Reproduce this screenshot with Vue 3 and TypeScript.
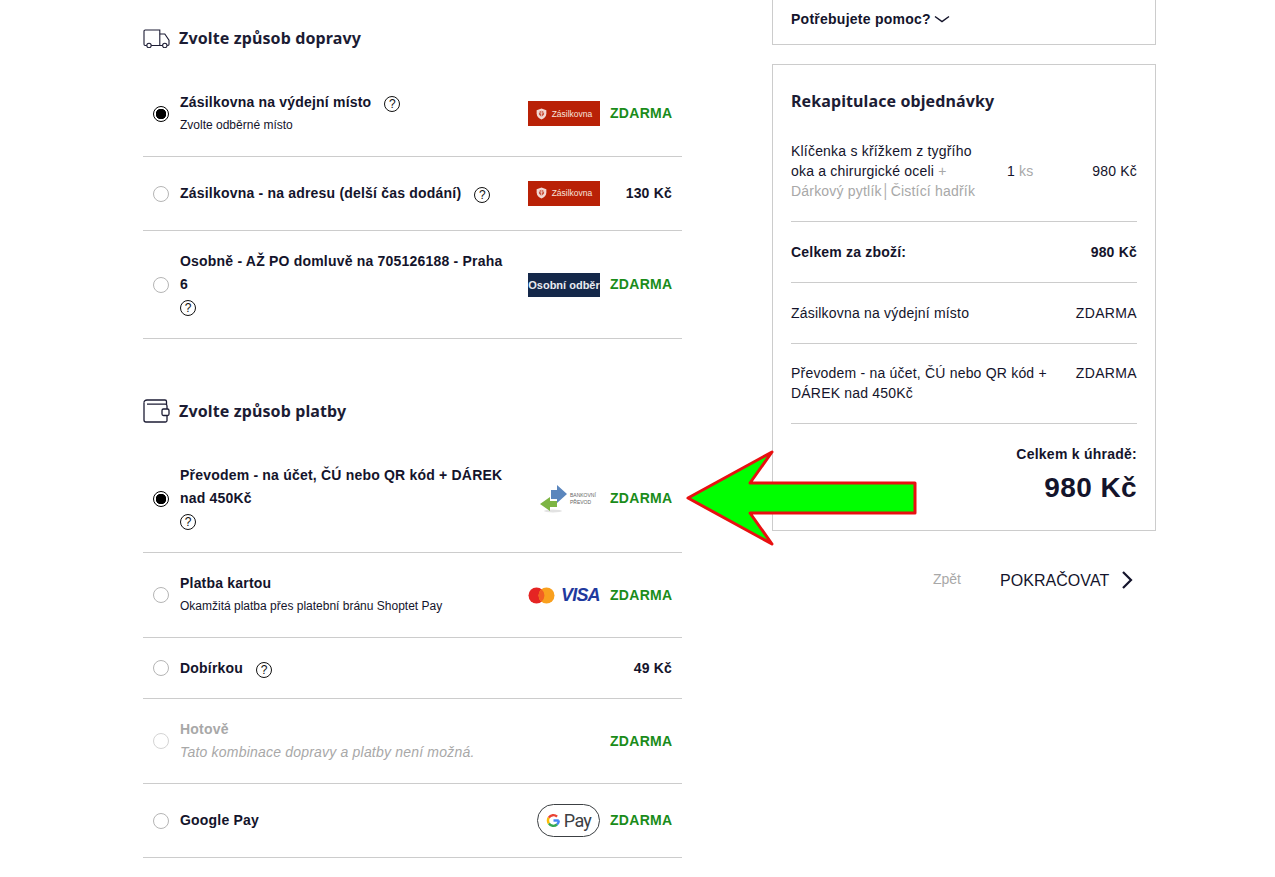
<script setup lang="ts">
type Logo = 'zas' | 'osobni' | 'bank' | 'cards' | 'gpay' | ''
interface Row {
  name: string
  sub?: string
  help?: 'inline' | 'block'
  logo: Logo
  price: string
  checked?: boolean
  disabled?: boolean
}
const delivery: Row[] = [
  { name: 'Zásilkovna na výdejní místo', sub: 'Zvolte odběrné místo', help: 'inline', logo: 'zas', price: 'ZDARMA', checked: true },
  { name: 'Zásilkovna - na adresu (delší čas dodání)', help: 'inline', logo: 'zas', price: '130 Kč' },
  { name: 'Osobně - AŽ PO domluvě na 705126188 - Praha 6', help: 'block', logo: 'osobni', price: 'ZDARMA' },
]
const payment: Row[] = [
  { name: 'Převodem - na účet, ČÚ nebo QR kód + DÁREK nad 450Kč', help: 'block', logo: 'bank', price: 'ZDARMA', checked: true },
  { name: 'Platba kartou', sub: 'Okamžitá platba přes platební bránu Shoptet Pay', logo: 'cards', price: 'ZDARMA' },
  { name: 'Dobírkou', help: 'inline', logo: '', price: '49 Kč' },
  { name: 'Hotově', sub: 'Tato kombinace dopravy a platby není možná.', logo: '', price: 'ZDARMA', disabled: true },
  { name: 'Google Pay', logo: 'gpay', price: 'ZDARMA' },
]
const sections = [
  { title: 'Zvolte způsob dopravy', icon: 'truck', rows: delivery },
  { title: 'Zvolte způsob platby', icon: 'wallet', rows: payment },
]
</script>

<template>
  <div class="page">
    <main class="left">
      <section v-for="s in sections" :key="s.title" class="section">
        <h2 class="heading">
          <svg v-if="s.icon === 'truck'" class="hicon" viewBox="0 0 27 19" fill="none" stroke="#1c1c34" stroke-width="1.1">
            <path d="M3.800 16.500H2.200A1.200 1.200 0 0 1 1 15.300V2.200A1.200 1.200 0 0 1 2.200 1h14.600v15.500H8.200" />
            <path d="M16.800 5h5l4.200 6.200v4.100c0 .7-.5 1.200-1.200 1.200h-.6M19.600 16.500h-2.800" />
            <circle cx="6" cy="16.500" r="2.200" />
            <circle cx="21.800" cy="16.500" r="2.200" />
          </svg>
          <svg v-else class="hicon wallet" viewBox="0 0 27 24" fill="none" stroke="#1c1c34" stroke-width="1.300">
            <path d="M1 3.500C1 2 2.200 1 4 1h18c1 0 1.500.6 1.500 1.500V5" />
            <path d="M1 3.500V21c0 1.200.8 2 2 2h19.500c1 0 1.500-.8 1.500-1.500v-5M24 10V7c0-1-.6-1.800-1.700-1.800H4" />
            <rect x="19" y="10" width="7" height="6.500" rx="1.500" />
          </svg>
          <span>{{ s.title }}</span>
        </h2>
        <div
          v-for="r in s.rows"
          :key="r.name"
          class="row"
          :class="{
            disabled: r.disabled,
            up: r.logo && r.logo !== 'cards',
            single: r.logo && !r.sub && r.help !== 'block',
          }"
        >
          <span class="radio" :class="{ on: r.checked }"></span>
          <div class="text">
            <div class="name">
              {{ r.name }}<span v-if="r.help === 'inline'" class="help inline">?</span>
            </div>
            <div v-if="r.help === 'block'" class="helpline"><span class="help">?</span></div>
            <div v-if="r.sub" class="sub">{{ r.sub }}</div>
          </div>
          <div class="logo" :class="{ tall: r.logo }">
            <div v-if="r.logo === 'zas'" class="zas">
              <svg viewBox="0 0 12 13" width="11" height="12">
                <path d="M6 .5 11.300 2.500V6c0 3.200-2.300 5.300-5.300 6.500C3 11.300.7 9.200.7 6V2.500Z" fill="#f3d9d3" />
                <path d="M6 3 8.800 4.300V7L6 9.800 3.200 7V4.300Z" fill="#c9543f" />
                <path d="M6 3V9.800M3.200 4.300 6 6.200 8.800 4.300" stroke="#f3d9d3" stroke-width=".7" fill="none" />
              </svg>
              <span>Zásilkovna</span>
            </div>
            <div v-else-if="r.logo === 'osobni'" class="osobni">Osobní odběr</div>
            <div v-else-if="r.logo === 'bank'" class="bank">
              <svg viewBox="0 0 28 28" width="28" height="28">
                <ellipse cx="13" cy="26" rx="9" ry="1.500" fill="#e2e2e2" />
                <path d="M11 5H17V0L27 9 17 18V14H11Z" fill="#5b86bd" />
                <path d="M17 16H10V12L0 19 10 26V22H17Z" fill="#7db544" />
              </svg>
              <span>BANKOVNÍ<br />PŘEVOD</span>
            </div>
            <div v-else-if="r.logo === 'cards'" class="cards">
              <svg viewBox="0 0 27 17" width="27" height="17">
                <circle cx="8.500" cy="8.500" r="8" fill="#e52423" />
                <circle cx="18.500" cy="8.500" r="8" fill="#f9a01e" />
                <path d="M13.500 2.300a8 8 0 0 1 0 12.400 8 8 0 0 1 0-12.400Z" fill="#f26122" />
              </svg>
              <span class="visa">VISA</span>
            </div>
            <div v-else-if="r.logo === 'gpay'" class="gpay">
              <svg viewBox="0 0 16 16" width="15" height="15" fill="none" stroke-width="2.600">
                <path d="M13.600 8H8" stroke="#4285f4" />
                <path d="M13.700 8a5.800 5.800 0 0 1-2 4.300" stroke="#4285f4" />
                <path d="M11.700 12.300A5.800 5.800 0 0 1 3 11" stroke="#34a853" />
                <path d="M3 11a5.800 5.800 0 0 1 0-6" stroke="#fbbc04" />
                <path d="M3 5a5.800 5.800 0 0 1 8.800-1.200" stroke="#ea4335" />
              </svg>
              <span>Pay</span>
            </div>
          </div>
          <div class="price" :class="{ free: r.price === 'ZDARMA' }">{{ r.price }}</div>
        </div>
      </section>
    </main>

    <aside class="right">
      <div class="help-box">
        <span>Potřebujete pomoc?</span>
        <svg viewBox="0 0 16 8" width="16" height="8" fill="none" stroke="#14142b" stroke-width="1.500"><path d="M1 1.500 8 6.500 15 1.500" /></svg>
      </div>
      <div class="summary">
        <h2 class="sum-title">Rekapitulace objednávky</h2>
        <div class="item">
          <div class="item-name">
            <div>Klíčenka s křížkem z tygřího</div>
            <div>oka a chirurgické oceli <span class="gray">+</span></div>
            <div class="gray">Dárkový pytlík│Čistící hadřík</div>
          </div>
          <div class="qty"><b>1</b> <span class="gray">ks</span></div>
          <div class="amt">980 Kč</div>
        </div>
        <div class="line strong"><span>Celkem za zboží:</span><span>980 Kč</span></div>
        <div class="line"><span>Zásilkovna na výdejní místo</span><span class="free-sum">ZDARMA</span></div>
        <div class="line two"><span class="lname">Převodem - na účet, ČÚ nebo QR kód + DÁREK nad 450Kč</span><span class="free-sum">ZDARMA</span></div>
        <div class="total">
          <div class="total-label">Celkem k úhradě:</div>
          <div class="total-value">980 Kč</div>
        </div>
      </div>
      <div class="actions">
        <span class="back">Zpět</span>
        <span class="next">POKRAČOVAT</span>
        <svg viewBox="0 0 12 18" width="12" height="18" fill="none" stroke="#14142b" stroke-width="2.200"><path d="M2 1 10 9 2 17" /></svg>
      </div>
    </aside>

    <svg class="arrow" viewBox="0 0 240 104" width="240" height="104">
      <path d="M4 49 88 3 66 34H231V64H66L88 95Z" fill="#00ff00" stroke="#e81010" stroke-width="3" stroke-linejoin="round" />
    </svg>
  </div>
</template>

<style>
html, body { margin: 0; background: #fff; overflow: hidden; }
</style>

<style scoped>
.page {
  position: relative;
  height: 877px;
  box-sizing: border-box;
  padding-left: 143px;
  display: flex;
  gap: 90px;
  font-family: "Liberation Sans", Arial, sans-serif;
  color: #14142b;
  overflow: hidden;
}
.left { width: 539px; padding-top: 26px; }
.section + .section { margin-top: 60px; }
.heading {
  display: flex;
  align-items: center;
  height: 24px;
  margin: 0 0 22px;
  font: 700 16px/24px "Noto Sans", sans-serif;
  letter-spacing: .12px;
  color: #1c1c34;
}
.hicon { width: 27px; height: 19px; margin-right: 9px; flex: none; }
.hicon.wallet { height: 24px; }
.row {
  display: flex;
  align-items: center;
  box-sizing: border-box;
  padding: 18px 10px 18px 10px;
  border-bottom: 1px solid #ccc;
}
.radio {
  width: 16px;
  height: 16px;
  flex: none;
  box-sizing: border-box;
  border: 1px solid #b5b5b5;
  border-radius: 50%;
  margin-right: 11px;
}
.radio.on {
  border: 1.500px solid #000;
  background: radial-gradient(circle, #000 0 5px, #fff 5.500px);
}
.text { width: 330px; flex: none; margin-right: 18px; padding-top: 1px; }
.single .text { padding-top: 0; padding-bottom: 1px; }
.name {
  font-size: 14px;
  font-weight: 700;
  line-height: 23px;
  letter-spacing: .2px;
  color: #14142b;
}
.helpline { height: 24px; display: flex; align-items: center; }
.help {
  display: inline-block;
  box-sizing: border-box;
  width: 16px;
  height: 16px;
  border: 1px solid #111;
  border-radius: 50%;
  font: 400 12px/14px "Liberation Sans", sans-serif;
  text-align: center;
  color: #111;
  letter-spacing: 0;
}
.help.inline { margin-left: 13px; vertical-align: -1px; }
.sub { font-size: 12px; line-height: 22px; padding-bottom: 2px; color: #14142b; }
.logo { width: 72px; flex: none; display: flex; justify-content: center; align-items: center; }
.logo.tall { min-height: 37px; }
.price {
  width: 62px;
  margin-left: 10px;
  flex: none;
  text-align: right;
  font-size: 14px;
  font-weight: 700;
  letter-spacing: .2px;
  white-space: nowrap;
}
.up .price { padding-bottom: 2px; }
.price.free { color: #1a8c1a; letter-spacing: .3px; }
.disabled .name, .disabled .sub { color: #a8a8a8; }
.disabled .sub { font-style: italic; font-size: 14px; letter-spacing: .2px; }
.disabled .radio { border-color: #d4d4d4; }
.zas {
  width: 72px;
  height: 25px;
  margin-bottom: 1px;
  background: #b92106;
  display: flex;
  align-items: center;
  justify-content: center;
  gap: 5px;
  color: #f7e3de;
  font-size: 8.500px;
}
.osobni {
  width: 72px;
  height: 24px;
  background: #14284a;
  color: #e8ebf0;
  font-size: 11px;
  font-weight: 700;
  line-height: 24px;
  text-align: center;
  white-space: nowrap;
}
.bank { display: flex; align-items: center; gap: 2px; width: 60px; margin-left: 12px; }
.bank svg { flex: none; }
.bank span { font-size: 5px; line-height: 7px; color: #666; }
.cards { display: flex; align-items: center; gap: 6px; width: 72px; }
.visa {
  font-size: 18px;
  font-weight: 700;
  font-style: italic;
  color: #1f3a9e;
  letter-spacing: -.8px;
}
.gpay {
  box-sizing: border-box;
  width: 63px;
  height: 33px;
  margin-left: 9px;
  border: 1.500px solid #3c4043;
  border-radius: 17px;
  display: flex;
  align-items: center;
  justify-content: center;
  gap: 3px;
  font: 400 18px "Roboto", sans-serif;
  letter-spacing: -.7px;
  color: #3c4043;
}
.right { width: 384px; flex: none; }
.help-box {
  box-sizing: border-box;
  height: 45px;
  border: 1px solid #ccc;
  border-top: 0;
  display: flex;
  align-items: center;
  gap: 3px;
  padding: 0 18px 6px;
  font-size: 14px;
  font-weight: 700;
  letter-spacing: .25px;
}
.summary {
  box-sizing: border-box;
  height: 467px;
  margin-top: 19px;
  border: 1px solid #ccc;
  padding: 24px 18px 0 18px;
  font-size: 14px;
  line-height: 20px;
}
.sum-title { margin: 0 0 28px; font: 700 16px/24px "Noto Sans", sans-serif; letter-spacing: .1px; color: #1c1c34; }
.gray { color: #a8a8a8; }
.item {
  display: flex;
  align-items: center;
  padding-bottom: 20px;
  border-bottom: 1px solid #ccc;
  letter-spacing: .2px;
}
.item-name { width: 198px; flex: none; }
.qty { width: 60px; margin-left: 18px; }
.qty b { font-weight: 400; }
.amt { margin-left: auto; }
.line {
  display: flex;
  justify-content: space-between;
  padding: 20px 0;
  border-bottom: 1px solid #ccc;
  letter-spacing: .2px;
}
.line.two { padding: 19px 0 20px; }
.line.strong { font-weight: 700; }
.free-sum { letter-spacing: .35px; }
.lname { width: 270px; }
.total { text-align: right; padding-top: 20px; }
.total-label { font-weight: 700; letter-spacing: .25px; }
.total-value { font-size: 28px; letter-spacing: .4px; font-weight: 700; line-height: 40px; margin-top: 4px; }
.actions {
  display: flex;
  align-items: center;
  height: 24px;
  margin-top: 36px;
  padding-left: 161px;
}
.back { color: #a8a8a8; font-size: 14px; width: 67px; }
.next { font-size: 16px; letter-spacing: .05px; margin-top: 3px; }
.actions svg { margin-left: 12px; margin-top: 2px; }
.arrow { position: absolute; left: 684px; top: 449px; }
</style>
